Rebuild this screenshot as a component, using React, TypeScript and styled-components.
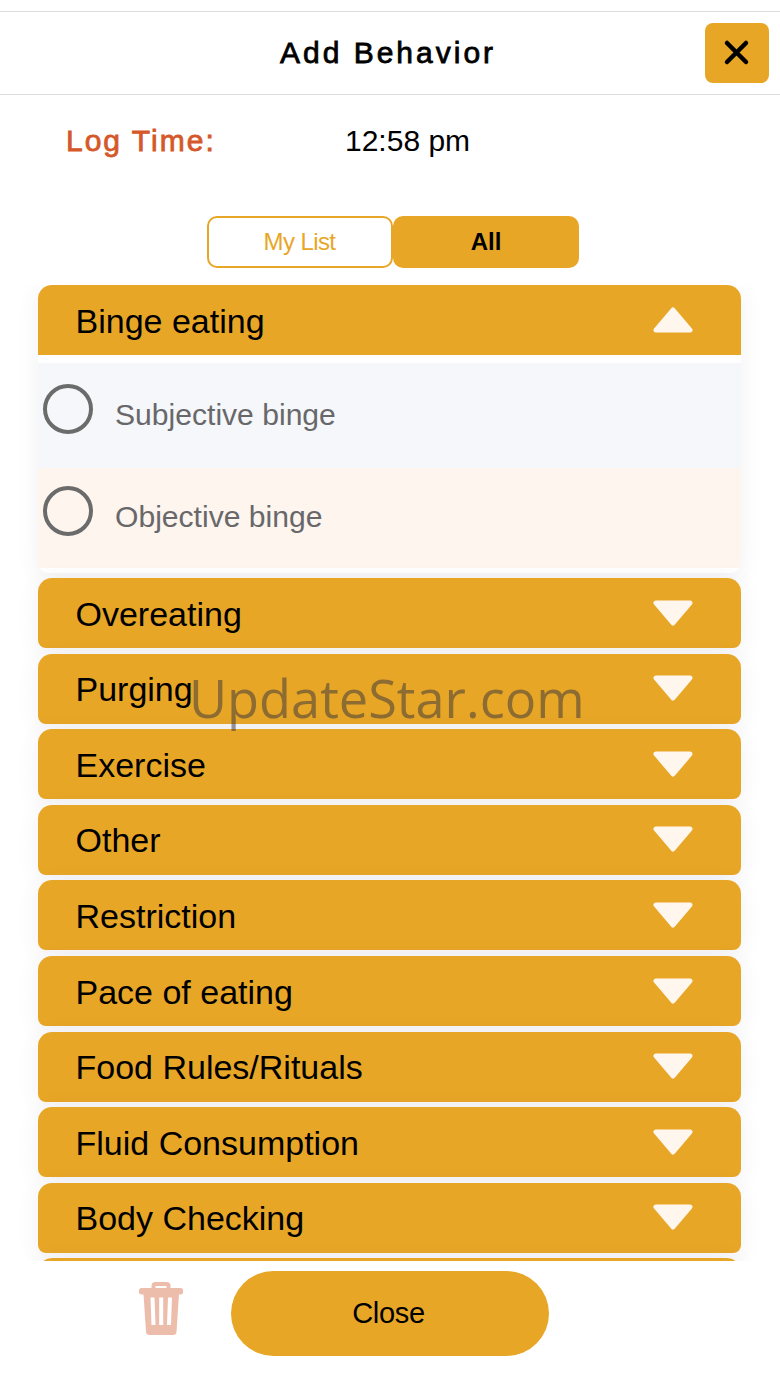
import React from 'react'
import styled, { createGlobalStyle } from 'styled-components'

const AMBER = '#e8a627'

const GlobalStyle = createGlobalStyle`
    html, body {
        margin: 0;
        padding: 0;
        background: #fff;
    }
    * {
        box-sizing: border-box;
    }
`

const Page = styled.div`
    position: relative;
    width: 780px;
    height: 1387px;
    display: flex;
    flex-direction: column;
    overflow: hidden;
    background: #fff;
    color: #000;
    font-family: "Liberation Sans", Arial, sans-serif;
`

const Header = styled.header`
    margin-top: 11px;
    height: 84px;
    flex: none;
    display: flex;
    align-items: center;
    justify-content: center;
    border-top: 1px solid #dcdcdc;
    border-bottom: 1px solid #dcdcdc;
    > h1 {
        margin: 0 4px 0 0;
        font-size: 30px;
        font-weight: normal;
        letter-spacing: 3px;
        -webkit-text-stroke: 0.8px #000;
    }
`

const CloseIcon = styled.button`
    position: absolute;
    top: 23px;
    right: 11px;
    width: 64px;
    height: 60px;
    padding: 0;
    border: 0;
    border-radius: 8px;
    background: ${AMBER};
    display: flex;
    align-items: center;
    justify-content: center;
`

const LogRow = styled.div`
    flex: none;
    height: 92px;
    padding: 0 0 0 66px;
    display: flex;
    align-items: center;
    font-size: 30px;
    > .label {
        width: 279px;
        color: #d5582a;
        letter-spacing: 2px;
        -webkit-text-stroke: 0.8px #d5582a;
    }
`

const Toggle = styled.div`
    flex: none;
    margin-top: 29px;
    padding-left: 206.5px;
    display: flex;
    gap: 0.5px;
`

const ToggleButton = styled.button<{ $active?: boolean }>`
    width: 186px;
    height: 52px;
    padding: 0;
    border: 2px solid ${AMBER};
    border-radius: 10px;
    font-family: inherit;
    font-size: 24px;
    letter-spacing: ${p => (p.$active ? 0 : '-0.6px')};
    font-weight: ${p => (p.$active ? 'bold' : 'normal')};
    background: ${p => (p.$active ? AMBER : '#fff')};
    color: ${p => (p.$active ? '#000' : AMBER)};
`

const List = styled.div`
    flex: 1;
    min-height: 0;
    margin-top: 17px;
    padding: 0 39px 0 37.5px;
    display: flex;
    flex-direction: column;
    gap: 5.6px;
    overflow: hidden;
`

const Item = styled.div`
    flex: none;
    border-radius: 14px 14px 10px 10px;
    background: #fff;
    box-shadow: 0 4px 22px rgba(60, 70, 100, 0.08);
`

const ItemHeader = styled.div<{ $open?: boolean }>`
    height: 70px;
    padding: 2px 48px 0 38px;
    display: flex;
    align-items: center;
    justify-content: space-between;
    background: ${AMBER};
    font-size: 34px;
    border-radius: ${p => (p.$open ? '14px 14px 0 0' : '14px 14px 8px 8px')};
    > svg {
        margin-bottom: 3px;
    }
`

const ItemBody = styled.div`
    padding: 8px 0 4.5px;
`

const Option = styled.div<{ $tint: string; $height: number }>`
    height: ${p => p.$height}px;
    padding: 0 0 2px 5px;
    display: flex;
    align-items: center;
    gap: 22.5px;
    background: ${p => p.$tint};
    color: #68686a;
    font-size: 30.1px;
`

const Radio = styled.span`
    flex: none;
    width: 50px;
    height: 50px;
    margin-bottom: 12px;
    border: 4px solid #6b6b6b;
    border-radius: 50%;
`

const Watermark = styled.div`
    position: absolute;
    top: 660px;
    left: 189px;
    font-family: "Open Sans", "Noto Sans", sans-serif;
    font-size: 52.3px;
    line-height: 76px;
    color: rgba(50, 50, 60, 0.5);
    pointer-events: none;
`

const Footer = styled.footer`
    flex: none;
    height: 126px;
    padding: 10px 0 0 138px;
    display: flex;
    align-items: flex-start;
    gap: 46.5px;
    background: #fff;
    position: relative;
    > svg {
        margin-top: 11px;
    }
`

const CloseButton = styled.button`
    width: 318px;
    height: 85px;
    padding: 0 2px 0 0;
    border: 0;
    border-radius: 43px;
    background: ${AMBER};
    color: #000;
    font-family: inherit;
    font-size: 29px;
    letter-spacing: -0.3px;
`

const Chevron: React.FC<{ up?: boolean }> = ({ up }) => (
    <svg width="40" height="26" viewBox="0 0 40 26">
        <path
            d={up ? 'M20 3 L37 23 L3 23 Z' : 'M3 3 L37 3 L20 23 Z'}
            fill="#fff6ee"
            stroke="#fff6ee"
            strokeWidth="5"
            strokeLinejoin="round"
        />
    </svg>
)

const TrashIcon = () => (
    <svg width="46" height="54" viewBox="0 0 46 54" fill="#edbdab">
        <path d="M13.5 7 V4 Q13.5 0 17.5 0 H28.5 Q32.5 0 32.5 4 V7 H28.5 V4 H17.5 V7 Z" />
        <rect x="1" y="6" width="44" height="6.5" rx="2.5" />
        <path
            fillRule="evenodd"
            d="M5.5 12 H41 L38.5 50 Q38.2 53 35 53 H11.5 Q8.3 53 8 50 Z M12.5 15.5 L13.5 43 H17.5 L16.5 15.5 Z M21.2 15.5 V43 H25.2 V15.5 Z M30 15.5 L29 43 H33 L34 15.5 Z"
        />
    </svg>
)

const CATEGORIES = [
    'Overeating',
    'Purging',
    'Exercise',
    'Other',
    'Restriction',
    'Pace of eating',
    'Food Rules/Rituals',
    'Fluid Consumption',
    'Body Checking',
]

const App: React.FC = () => {
    return (
        <Page>
            <GlobalStyle />
            <Header>
                <h1>Add Behavior</h1>
            </Header>
            <CloseIcon aria-label="Close">
                <svg width="30" height="30" viewBox="0 0 30 30">
                    <path d="M5 5 L24 24 M24 5 L5 24" stroke="#000" strokeWidth="4.5" strokeLinecap="round" />
                </svg>
            </CloseIcon>

            <LogRow>
                <span className="label">Log Time:</span>
                <span>12:58 pm</span>
            </LogRow>

            <Toggle>
                <ToggleButton>My List</ToggleButton>
                <ToggleButton $active>All</ToggleButton>
            </Toggle>

            <List>
                <Item>
                    <ItemHeader $open>
                        Binge eating
                        <Chevron up />
                    </ItemHeader>
                    <ItemBody>
                        <Option $tint="#f5f7fa" $height={105}>
                            <Radio />
                            Subjective binge
                        </Option>
                        <Option $tint="#fdf5ee" $height={100}>
                            <Radio />
                            Objective binge
                        </Option>
                    </ItemBody>
                </Item>
                {CATEGORIES.map(name => (
                    <Item key={name}>
                        <ItemHeader>
                            {name}
                            <Chevron />
                        </ItemHeader>
                    </Item>
                ))}
                {/* next category, only its top edge shows above the footer */}
                <Item>
                    <ItemHeader />
                </Item>
            </List>

            <Footer>
                <TrashIcon />
                <CloseButton>Close</CloseButton>
            </Footer>

            <Watermark>UpdateStar.com</Watermark>
        </Page>
    )
}

export default App
